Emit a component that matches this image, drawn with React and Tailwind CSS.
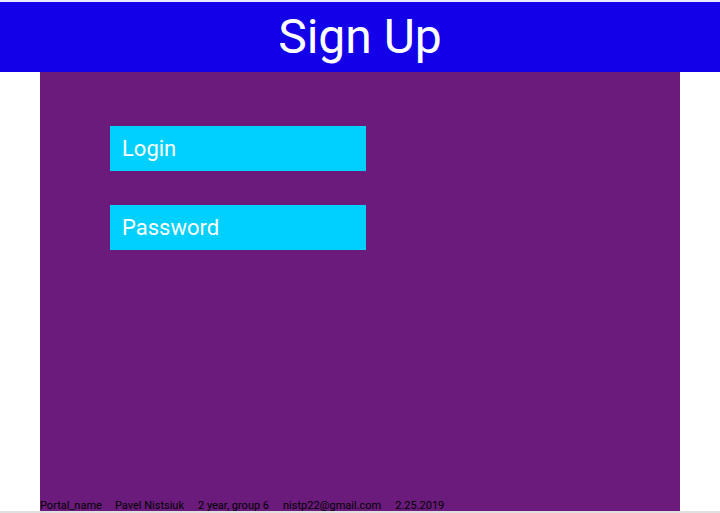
export default function App() {
  const font = { fontFamily: 'Roboto, "Liberation Sans", sans-serif' };
  return (
    <div className="w-[720px] h-[513px] bg-white flex flex-col overflow-hidden" style={font}>
      <div className="h-[2px] bg-[#e8e8ff]" />
      <header className="h-[70px] bg-[#1300e9] flex items-center justify-center">
        <h1 className="text-[48px] leading-none text-white font-normal" style={font}>Sign Up</h1>
      </header>
      <main className="mx-[40px] h-[439px] bg-[#6a1b7b] flex flex-col">
        <div className="flex-1 pl-[70px] pt-[54px] flex flex-col gap-[34px]">
          <div className="w-[256px] h-[45px] bg-[#00d0ff] flex items-center pl-[12px] text-[22px] text-white">Login</div>
          <div className="w-[256px] h-[45px] bg-[#00d0ff] flex items-center pl-[12px] text-[22px] text-white">Password</div>
        </div>
        <footer className="flex text-[11px] leading-[10px] text-black">
          <span className="mr-[13px]">Portal_name</span>
          <span className="mr-[14px]">Pavel Nistsiuk</span>
          <span className="mr-[14px]">2 year, group 6</span>
          <span className="mr-[14px]">nistp22@gmail.com</span>
          <span>2.25.2019</span>
        </footer>
      </main>
      <div className="h-[2px] bg-[#e0e0e0]" />
    </div>
  );
}
